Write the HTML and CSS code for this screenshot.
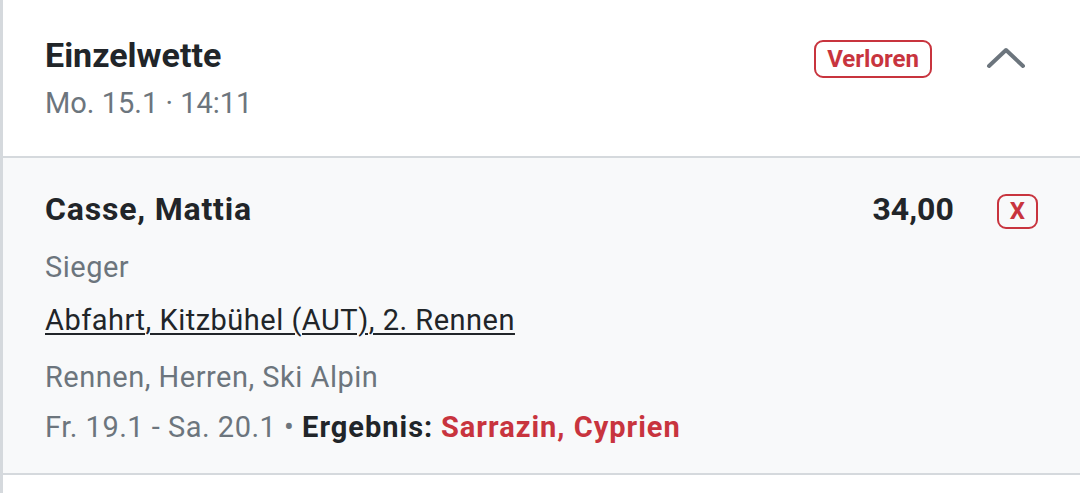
FILE: index.html
```html
<!DOCTYPE html>
<html lang="de">
<head>
  <meta charset="UTF-8" />
  <meta name="viewport" content="width=device-width, initial-scale=1.0" />
  <title>Einzelwette</title>
  <link rel="stylesheet" href="styles.css">
</head>
<body>
  <div class="bet">
    <div class="bet-header">
      <div class="bet-title">
        <h2>Einzelwette</h2>
        <p class="muted">Mo. 15.1 · 14:11</p>
      </div>
      <span class="badge">Verloren</span>
      <button class="toggle" aria-label="Zuklappen">
        <svg width="40" height="24" viewBox="0 0 40 24">
          <path d="M3 20 L20 4 L37 20" fill="none" stroke="#6c757d" stroke-width="4" stroke-linecap="round" stroke-linejoin="round"/>
        </svg>
      </button>
    </div>
    <div class="selection">
      <div class="selection-top">
        <h3>Casse, Mattia</h3>
        <span class="odds">34,00</span>
        <span class="badge small">X</span>
      </div>
      <p class="muted market">Sieger</p>
      <p class="event"><a href="#">Abfahrt, Kitzbühel (AUT), 2. Rennen</a></p>
      <p class="muted">Rennen, Herren, Ski Alpin</p>
      <p class="muted">Fr. 19.1 - Sa. 20.1 • <b class="dark">Ergebnis:</b> <b class="red">Sarrazin, Cyprien</b></p>
    </div>
  </div>
</body>
</html>
```

FILE: styles.css
```css
body {
  margin: 0;
  font-family: Roboto, "Liberation Sans", sans-serif;
  background: #fff;
  color: #212529;
}
.bet {
  border-left: 3px solid #d5d9dd;
  height: 493px;
}
.bet-header {
  display: flex;
  align-items: flex-start;
  padding: 35px 54px 30px 42px;
  border-bottom: 2px solid #d5d9dd;
}
.bet-title {
  flex: 1;
}
h2 {
  margin: 0;
  font-size: 34px;
  font-weight: 700;
  line-height: 40px;
}
p {
  margin: 0;
  font-size: 29px;
  line-height: 50px;
  letter-spacing: 0.5px;
}
p b {
  letter-spacing: 1px;
}
.bet-title .muted {
  margin-top: 5px;
  line-height: 46px;
  letter-spacing: 0;
}
.muted { color: #6c757d; }
.dark { color: #212529; }
.red { color: #c8343e; }
.badge {
  border: 2px solid #c8343e;
  border-radius: 9px;
  color: #c8343e;
  font-weight: 700;
  font-size: 24px;
  padding: 3px 11px;
  line-height: 28px;
  margin-top: 5px;
}
.toggle {
  background: none;
  border: 0;
  padding: 0;
  margin: 11px 0 0 54px;
  cursor: pointer;
}
.selection {
  background: #f8f9fa;
  padding: 31px 42px 21px 42px;
  border-bottom: 2px solid #d5d9dd;
}
.selection-top {
  display: flex;
  align-items: center;
  margin-bottom: 13px;
}
h3 {
  flex: 1;
  margin: 0;
  font-size: 32px;
  font-weight: 700;
  letter-spacing: 0.8px;
  line-height: 40px;
}
.odds {
  font-size: 32px;
  font-weight: 700;
}
.badge.small {
  margin: 4px 0 0 43px;
  padding: 2px 11px;
  line-height: 27px;
}
.market { margin-bottom: 3px; }
.event { margin-bottom: 7px; }
a {
  color: #212529;
  text-decoration: underline;
  text-underline-offset: 3px;
  text-decoration-thickness: 2px;
}
```
